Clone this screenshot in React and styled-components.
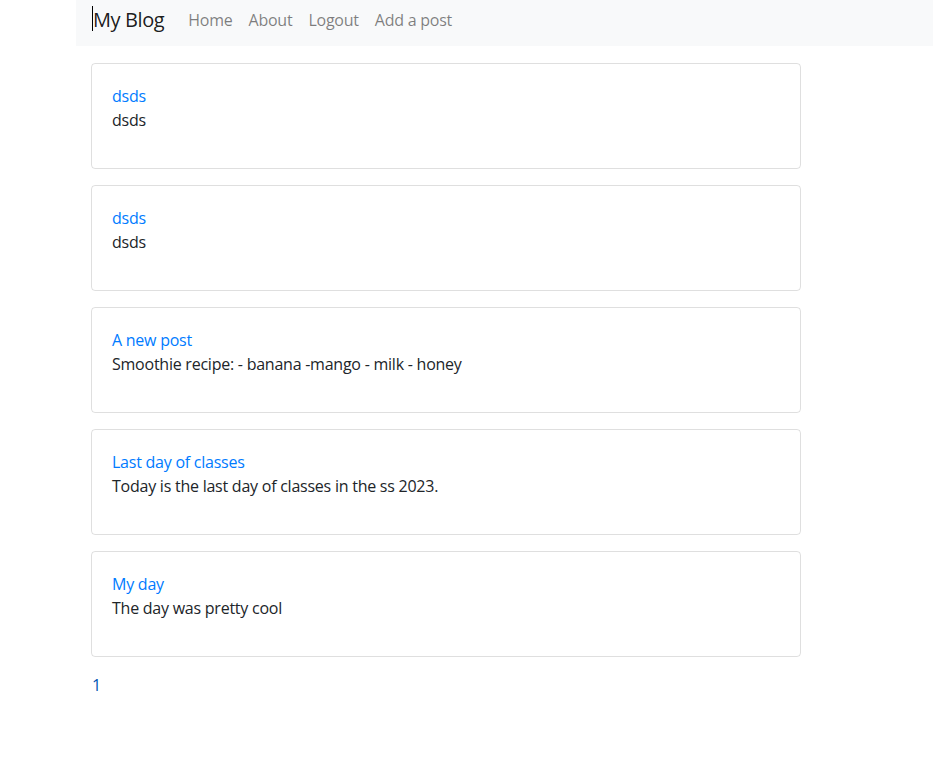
import styled, { createGlobalStyle } from "styled-components";

const GlobalStyle = createGlobalStyle`
  body {
    margin: 0;
    background: #fff;
    color: #212529;
    font-family: "Open Sans", "Noto Sans", sans-serif;
    font-size: 16px;
    line-height: 1.5;
    letter-spacing: -0.015em;
  }
`;

const posts = [
  { title: "dsds", body: "dsds" },
  { title: "dsds", body: "dsds" },
  { title: "A new post", body: "Smoothie recipe: - banana -mango - milk - honey" },
  { title: "Last day of classes", body: "Today is the last day of classes in the ss 2023." },
  { title: "My day", body: "The day was pretty cool" },
];

const App = () => {
  return (
    <>
      <GlobalStyle />
      <Page>
        <Navbar>
          <Brand>
            <Caret />
            My Blog
          </Brand>
          <NavLink>Home</NavLink>
          <NavLink>About</NavLink>
          <NavLink>Logout</NavLink>
          <NavLink>Add a post</NavLink>
        </Navbar>
        <Main>
          {posts.map((post, i) => (
            <Card key={i}>
              <CardTitle href="#">{post.title}</CardTitle>
              <CardText>{post.body}</CardText>
            </Card>
          ))}
          <PageLink href="#">1</PageLink>
        </Main>
      </Page>
    </>
  );
};

const Page = styled.div`
  padding-left: 76px;
`;

const Navbar = styled.nav`
  display: flex;
  align-items: center;
  height: 46px;
  padding: 0 16px 6px;
  box-sizing: border-box;
  background-color: #f8f9fa;
`;

const Brand = styled.a`
  position: relative;
  font-size: 20px;
  color: rgba(0, 0, 0, 0.9);
  margin-right: 16px;
  padding-left: 1px;
  letter-spacing: -0.02em;
`;

const Caret = styled.span`
  position: absolute;
  left: 0;
  top: 1px;
  width: 1px;
  height: 25px;
  background: #000;
`;

const NavLink = styled.a`
  color: rgba(0, 0, 0, 0.5);
  padding: 0 8px;
`;

const Main = styled.main`
  padding: 17px 15px 0;
  width: 710px;
`;

const Card = styled.div`
  display: flex;
  flex-direction: column;
  align-items: flex-start;
  border: 1px solid rgba(0, 0, 0, 0.125);
  border-radius: 4px;
  padding: 20px;
  margin-bottom: 16px;
`;

const CardTitle = styled.a`
  color: #007bff;
  text-decoration: none;
`;

const CardText = styled.p`
  margin: 0 0 16px;
`;

const PageLink = styled.a`
  color: #0056b3;
  text-decoration: none;
  padding-left: 1px;
`;

export default App;
